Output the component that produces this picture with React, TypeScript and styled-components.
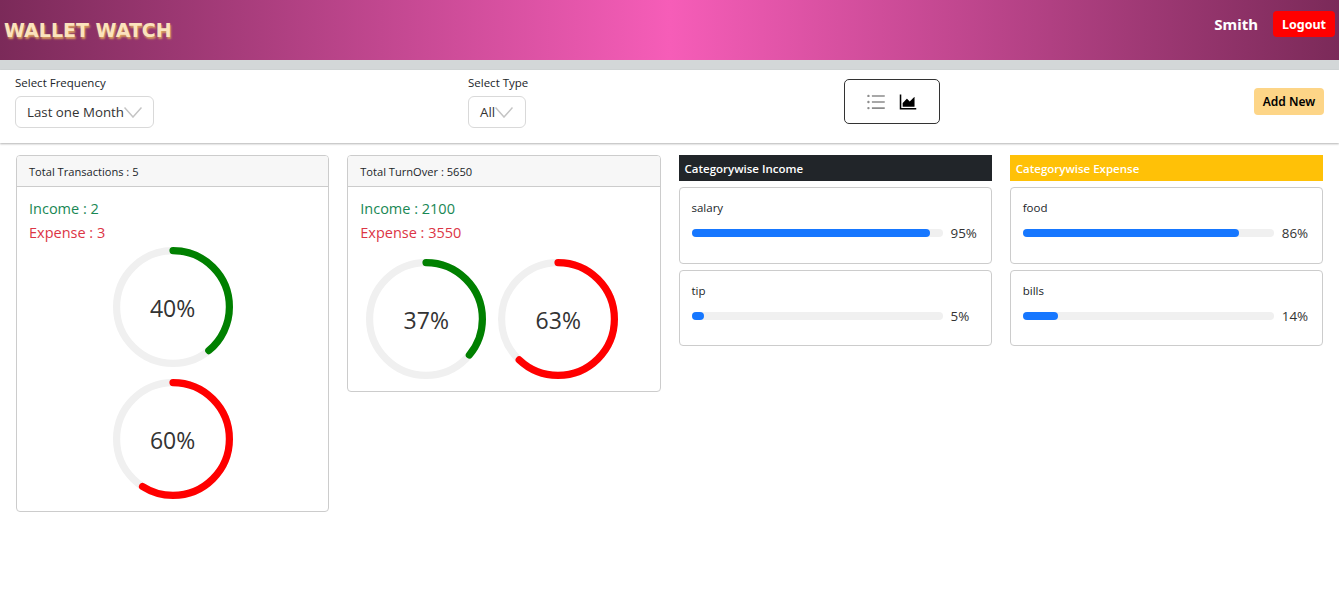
import styled, { createGlobalStyle } from 'styled-components';
import { AiOutlineAreaChart, AiOutlineUnorderedList } from 'react-icons/ai';

const GlobalStyle = createGlobalStyle`
  * {
    box-sizing: border-box;
  }
  body {
    margin: 0;
    background: #fff;
    color: #212529;
    font-family: 'Open Sans', 'Noto Sans', sans-serif;
  }
`;

const incomeCategories = [
  { name: 'salary', percent: 95 },
  { name: 'tip', percent: 5 },
];
const expenseCategories = [
  { name: 'food', percent: 86 },
  { name: 'bills', percent: 14 },
];

function Ring({ percent, color }: { percent: number; color: string }) {
  const radius = 56.4;
  const length = 2 * Math.PI * radius;
  // the round cap adds half a stroke at the end, so take it off the dash
  const arc = (length * percent) / 100 - 3.6;
  return (
    <RingBox>
      <svg width="120" height="120" viewBox="0 0 120 120">
        <circle cx="60" cy="60" r={radius} fill="none" stroke="#f0f0f0" strokeWidth="7.2" />
        <circle
          cx="60"
          cy="60"
          r={radius}
          fill="none"
          stroke={color}
          strokeWidth="7.2"
          strokeLinecap="round"
          strokeDasharray={`${arc} ${length}`}
          transform="rotate(-90 60 60)"
        />
      </svg>
      <RingText>{percent}%</RingText>
    </RingBox>
  );
}

function Category({ name, percent }: { name: string; percent: number }) {
  return (
    <CategoryCard>
      <CategoryName>{name}</CategoryName>
      <BarRow>
        <BarTrack>
          <BarFill style={{ width: `${percent}%` }} />
        </BarTrack>
        <BarValue>{percent}%</BarValue>
      </BarRow>
    </CategoryCard>
  );
}

export default function App() {
  return (
    <>
      <GlobalStyle />
      <Header>
        <Brand>WALLET WATCH</Brand>
        <UserArea>
          <UserName>Smith</UserName>
          <LogoutButton>Logout</LogoutButton>
        </UserArea>
      </Header>
      <Band />
      <Filters>
        <FrequencyField>
          <FieldLabel>Select Frequency</FieldLabel>
          <SelectBox>
            Last one Month
            <Chevron />
          </SelectBox>
        </FrequencyField>
        <TypeField>
          <FieldLabel>Select Type</FieldLabel>
          <TypeSelect>
            All
            <Chevron />
          </TypeSelect>
        </TypeField>
        <ViewSwitch>
          <AiOutlineUnorderedList size={22} color="#8c8c8c" />
          <AiOutlineAreaChart size={22} color="#000" />
        </ViewSwitch>
        <AddButton>Add New</AddButton>
      </Filters>
      <Analytics>
        <Card>
          <CardHeader>Total Transactions : 5</CardHeader>
          <CardBody>
            <Income>Income : 2</Income>
            <Expense>Expense : 3</Expense>
            <RingStack>
              <Ring percent={40} color="green" />
              <Ring percent={60} color="red" />
            </RingStack>
          </CardBody>
        </Card>
        <Card>
          <CardHeader>Total TurnOver : 5650</CardHeader>
          <CardBody>
            <Income>Income : 2100</Income>
            <Expense>Expense : 3550</Expense>
            <RingRow>
              <Ring percent={37} color="green" />
              <Ring percent={63} color="red" />
            </RingRow>
          </CardBody>
        </Card>
        <div>
          <DarkTitle>Categorywise Income</DarkTitle>
          {incomeCategories.map((item) => (
            <Category key={item.name} {...item} />
          ))}
        </div>
        <div>
          <YellowTitle>Categorywise Expense</YellowTitle>
          {expenseCategories.map((item) => (
            <Category key={item.name} {...item} />
          ))}
        </div>
      </Analytics>
    </>
  );
}

function Chevron() {
  return (
    <ChevronIcon width="18" height="11" viewBox="0 0 18 11">
      <path d="M0.5 0.5 L9 10 L17.5 0.5" fill="none" stroke="#c4c4c4" strokeWidth="1.5" />
    </ChevronIcon>
  );
}

const Header = styled.header`
  height: 60px;
  display: flex;
  align-items: center;
  justify-content: space-between;
  padding: 0 4px;
  background: linear-gradient(90deg, #7b2a59 0%, #f65db8 50%, #7b2a59 100%);
`;
const Brand = styled.div`
  font-family: 'DejaVu Sans', sans-serif;
  font-size: 19px;
  font-weight: 700;
  color: #fbe3bd;
  text-shadow: 1px 2px 2px #d9a05f;
`;
const UserArea = styled.div`
  display: flex;
  align-items: center;
  gap: 15px;
  margin-bottom: 12px;
`;
const UserName = styled.span`
  font-family: 'Noto Sans', sans-serif;
  font-size: 15px;
  font-weight: 700;
  color: #fff;
`;
const LogoutButton = styled.button`
  width: 62px;
  height: 26px;
  padding: 0;
  border: 0;
  border-radius: 4px;
  background: #f00;
  color: #fff;
  font-family: 'Noto Sans', sans-serif;
  font-size: 12.5px;
  font-weight: 700;
`;
const Band = styled.div`
  height: 10px;
  background: #d3d7d8;
`;
const Filters = styled.section`
  height: 73px;
  display: flex;
  align-items: flex-start;
  padding: 4px 15px 0;
  box-shadow: 0 1px 2px rgba(0, 0, 0, 0.3);
`;
const FrequencyField = styled.div`
  width: 453px;
`;
const TypeField = styled.div`
  width: 376px;
`;
const FieldLabel = styled.div`
  font-size: 11.5px;
  line-height: 17px;
  margin-bottom: 5px;
`;
const SelectBox = styled.div`
  display: inline-flex;
  align-items: center;
  height: 32px;
  padding: 0 11px;
  border: 1px solid #d9d9d9;
  border-radius: 6px;
  font-size: 13.3px;
  color: #333;
`;
const TypeSelect = styled(SelectBox)`
  width: 58px;
`;
const ChevronIcon = styled.svg`
  flex: none;
`;
const ViewSwitch = styled.div`
  width: 96px;
  height: 45px;
  margin-top: 5px;
  padding-top: 1px;
  display: flex;
  align-items: center;
  justify-content: center;
  gap: 10px;
  border: 1px solid #333;
  border-radius: 5px;
`;
const AddButton = styled.button`
  width: 70px;
  height: 27px;
  margin: 14px 0 0 auto;
  padding: 0;
  border: 0;
  border-radius: 4px;
  background: #fdd587;
  color: #000;
  font-family: 'Noto Sans', sans-serif;
  font-size: 12px;
  font-weight: 600;
`;
const Analytics = styled.main`
  display: grid;
  grid-template-columns: repeat(4, 1fr);
  gap: 18px;
  align-items: start;
  padding: 12px 16px 0;
`;
const Card = styled.article`
  border: 1px solid #ccc;
  border-radius: 4px;
  overflow: hidden;
`;
const CardHeader = styled.div`
  height: 31px;
  padding: 0 12px;
  display: flex;
  align-items: center;
  background: #f7f7f7;
  border-bottom: 1px solid #ccc;
  font-size: 11.1px;
`;
const CardBody = styled.div`
  padding: 10px 12px 12px;
`;
const Income = styled.div`
  color: #198754;
  font-size: 14.5px;
  font-weight: 500;
  line-height: 24px;
`;
const Expense = styled(Income)`
  color: #dc3545;
`;
const RingStack = styled.div`
  display: flex;
  flex-direction: column;
  align-items: center;
  gap: 12px;
  margin-top: 2px;
`;
const RingRow = styled.div`
  display: flex;
  gap: 12px;
  margin: 14px 0 0 6px;
`;
const RingBox = styled.div`
  position: relative;
  width: 120px;
  height: 120px;
  svg {
    display: block;
  }
`;
const RingText = styled.span`
  position: absolute;
  inset: 2px 0 0;
  display: flex;
  align-items: center;
  justify-content: center;
  font-size: 23px;
  color: #333;
`;
const DarkTitle = styled.div`
  height: 26px;
  margin-bottom: 6px;
  padding: 0 6px;
  display: flex;
  align-items: center;
  background: #212529;
  color: #fff;
  font-size: 11.5px;
  font-weight: 600;
`;
const YellowTitle = styled(DarkTitle)`
  background: #ffc107;
`;
const CategoryCard = styled.div`
  height: 76.5px;
  margin-bottom: 6px;
  padding: 11px 12px;
  border: 1px solid #ccc;
  border-radius: 4px;
`;
const CategoryName = styled.div`
  font-size: 11.5px;
  line-height: 17px;
`;
const BarRow = styled.div`
  display: flex;
  align-items: center;
  margin-top: 8px;
`;
const BarTrack = styled.div`
  width: 251px;
  height: 8px;
  flex: none;
  border-radius: 4px;
  background: #f0f0f0;
`;
const BarFill = styled.div`
  height: 100%;
  border-radius: 4px;
  background: #1677ff;
`;
const BarValue = styled.span`
  margin-left: 8px;
  font-size: 13.4px;
  color: #333;
`;
